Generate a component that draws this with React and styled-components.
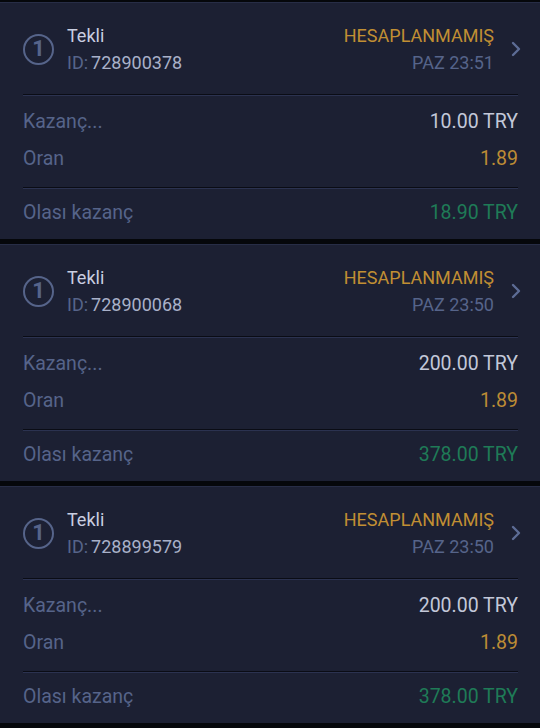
import React from "react";
import styled, { createGlobalStyle } from "styled-components";

const Global = createGlobalStyle`
  html, body { margin: 0; padding: 0; background: #05070b; }
  body { font-family: Roboto, "Noto Sans", "Liberation Sans", sans-serif; }
`;

const Page = styled.div`
  width: 540px;
  padding-top: 2px;
  display: flex;
  flex-direction: column;
  gap: 5px;
  background: #05070b;
`;

const Card = styled.div`
  background: #1c2033;
  border-top: 1px solid #272d46;
  padding: 0 22px 0 23px;
  display: flex;
  flex-direction: column;
`;

const Header = styled.div`
  display: flex;
  align-items: center;
  padding: 19px 0 18px;
`;

const Badge = styled.div`
  width: 27px;
  height: 27px;
  border: 2.5px solid #56648a;
  border-radius: 50%;
  display: flex;
  align-items: center;
  justify-content: center;
  color: #56648a;
  font-size: 22px;
  font-weight: 700;
  line-height: 1;
  margin-right: 13px;
  flex-shrink: 0;
`;

const Col = styled.div`
  display: flex;
  flex-direction: column;
  align-items: ${(p) => (p.$right ? "flex-end" : "flex-start")};
  flex: ${(p) => (p.$right ? "0 0 auto" : "1")};
  font-size: 18px;
  line-height: 27px;
`;

const Title = styled.span`
  color: #c9cee0;
`;

const IdLine = styled.span`
  color: #56648a;
`;

const IdNum = styled.span`
  color: #a9b1c9;
  margin-left: 3px;
`;

const Status = styled.span`
  color: #c18f33;
`;

const Time = styled.span`
  color: #56648a;
`;

const Chevron = styled.svg`
  width: 10px;
  height: 16px;
  margin-left: 17px;
  margin-right: -3px;
  flex-shrink: 0;
`;

const Divider = styled.div`
  height: 1px;
  background: #0a0c15;
  border-bottom: 1px solid #2b3250;
`;

const Section = styled.div`
  display: flex;
  flex-direction: column;
  padding: ${(p) => p.$pad};
`;

const Row = styled.div`
  display: flex;
  justify-content: space-between;
  align-items: center;
  height: 37px;
  font-size: 19.5px;
`;

const Label = styled.span`
  color: #56648a;
`;

const Value = styled.span`
  color: ${(p) => p.$color};
`;

const bets = [
  { id: "728900378", time: "PAZ 23:51", stake: "10.00 TRY", odds: "1.89", win: "18.90 TRY" },
  { id: "728900068", time: "PAZ 23:50", stake: "200.00 TRY", odds: "1.89", win: "378.00 TRY" },
  { id: "728899579", time: "PAZ 23:50", stake: "200.00 TRY", odds: "1.89", win: "378.00 TRY" },
];

function BetCard({ bet }) {
  return (
    <Card>
      <Header>
        <Badge>1</Badge>
        <Col>
          <Title>Tekli</Title>
          <IdLine>
            ID:<IdNum>{bet.id}</IdNum>
          </IdLine>
        </Col>
        <Col $right>
          <Status>HESAPLANMAMIŞ</Status>
          <Time>{bet.time}</Time>
        </Col>
        <Chevron viewBox="0 0 10 16">
          <polyline points="2,2 8,8 2,14" fill="none" stroke="#5d6c95" strokeWidth="2.4" strokeLinecap="round" strokeLinejoin="round" />
        </Chevron>
      </Header>
      <Divider />
      <Section $pad="7px 0 10px">
        <Row>
          <Label>Kazanç...</Label>
          <Value $color="#c3c8d9">{bet.stake}</Value>
        </Row>
        <Row>
          <Label>Oran</Label>
          <Value $color="#bd8c35">{bet.odds}</Value>
        </Row>
      </Section>
      <Divider />
      <Section $pad="5px 0 8px">
        <Row>
          <Label>Olası kazanç</Label>
          <Value $color="#1f7b57">{bet.win}</Value>
        </Row>
      </Section>
    </Card>
  );
}

export default function App() {
  return (
    <>
      <Global />
      <Page>
        {bets.map((b, i) => (
          <BetCard key={i} bet={b} />
        ))}
      </Page>
    </>
  );
}
